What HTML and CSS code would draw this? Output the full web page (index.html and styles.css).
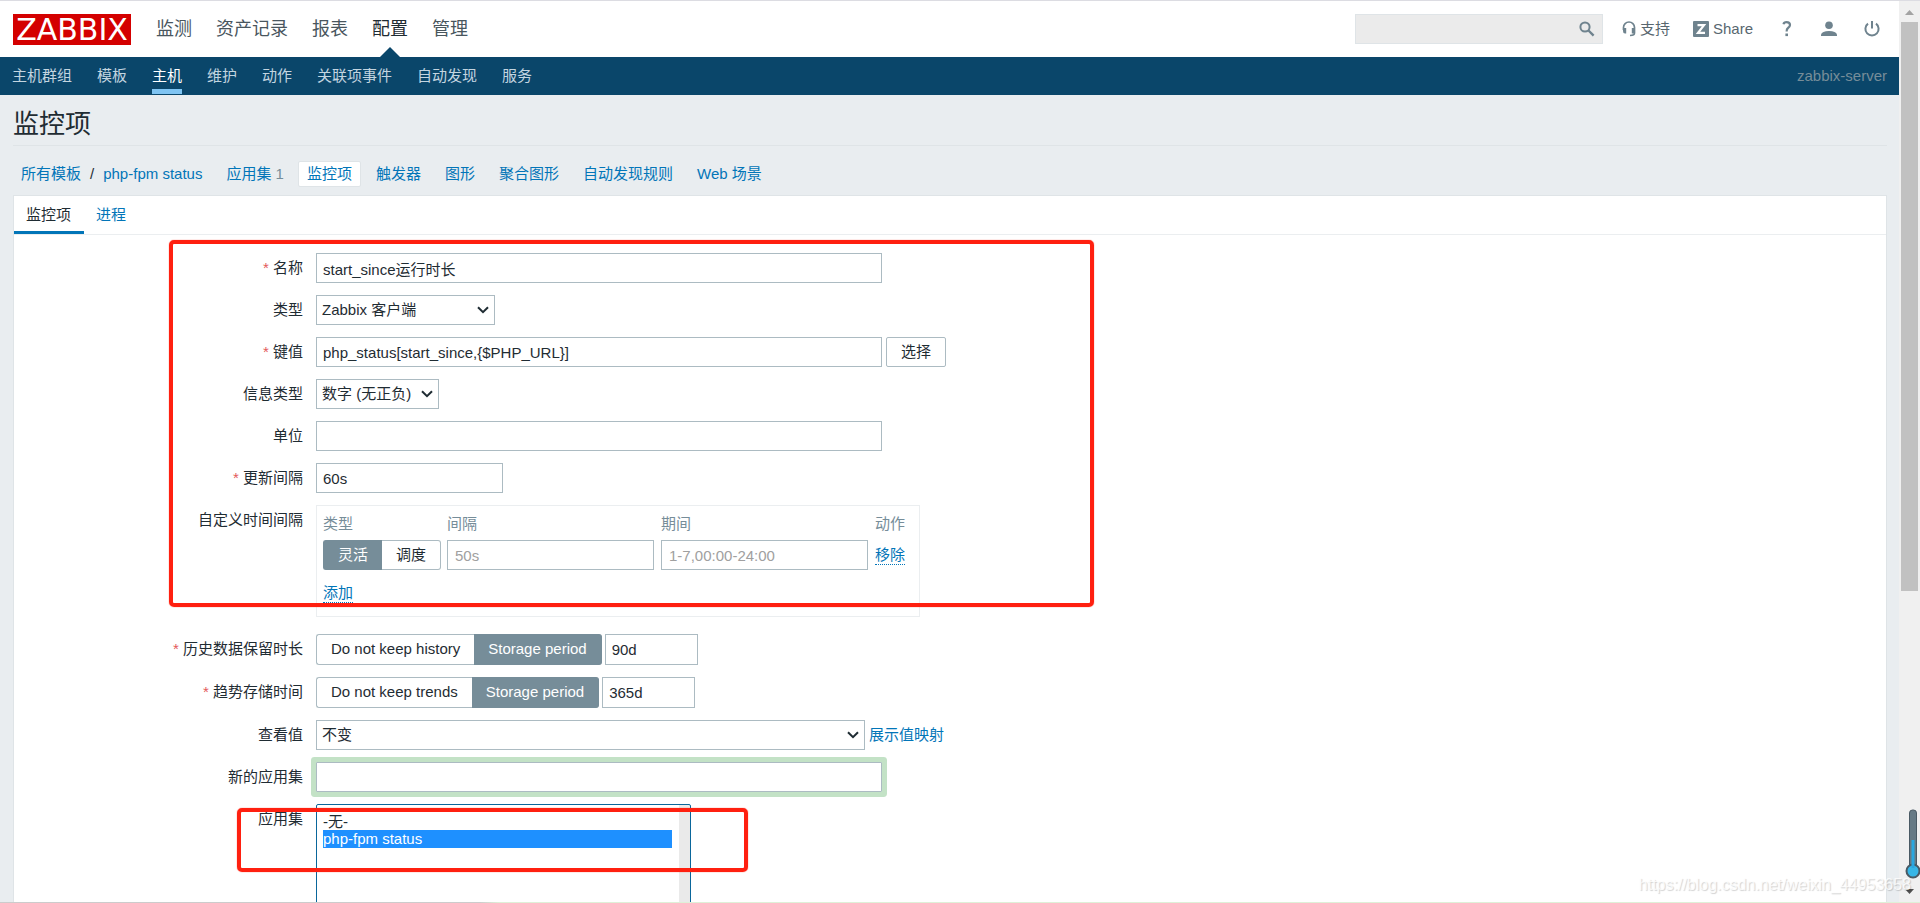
FILE: index.html
```
<!DOCTYPE html>
<html lang="zh-CN">
<head>
  <meta charset="UTF-8">
  <meta name="viewport" content="width=device-width, initial-scale=1.0">
  <title>监控项 - Zabbix</title>
  <link rel="stylesheet" href="styles.css">
</head>
<body>
  <div class="page">
    <header class="top-nav">
      <a href="#" class="logo">ZABBIX</a>
      <nav class="main-menu">
        <a href="#">监测</a>
        <a href="#">资产记录</a>
        <a href="#">报表</a>
        <a href="#" class="selected">配置</a>
        <a href="#">管理</a>
      </nav>
      <form class="search">
        <input type="text" aria-label="搜索">
        <button type="button" aria-label="搜索">
          <svg width="16" height="16" viewBox="0 0 16 16"><circle cx="6" cy="6" r="4.6" fill="none" stroke="#6f838e" stroke-width="2"/><path d="M9.5 9.5L14.6 14.6" stroke="#6f838e" stroke-width="2.4"/></svg>
        </button>
      </form>
      <div class="user-menu">
        <a href="#" class="support">
          <svg width="14" height="16" viewBox="0 0 14 16"><path d="M1.500 9V6.500A5.500 5.500 0 0 1 12.500 6.500V12Q12.500 14.300 8 14.500" fill="none" stroke="#6f838e" stroke-width="1.700"/><path d="M1 7h3.200v5.500H3Q1 12.500 1 10zM13 7H9.800v5.500H13z" fill="#6f838e"/></svg>
          支持
        </a>
        <a href="#" class="share">
          <svg width="16" height="16" viewBox="0 0 16 16"><rect width="16" height="16" rx="1" fill="#6f838e"/><path d="M4.500 4.200h6.500L5 11.800h7" fill="none" stroke="#fff" stroke-width="2.200"/></svg>
          Share
        </a>
        <a href="#" class="help" aria-label="帮助">
          <svg width="10" height="16" viewBox="0 0 10 16"><path d="M1.500 3.200Q2 1.200 4.500 1.200Q8 1.200 8 4Q8 5.500 6 7Q4.600 8 4.600 10.500" fill="none" stroke="#6f838e" stroke-width="2.200"/><rect x="3.400" y="12.500" width="2.600" height="2.600" fill="#6f838e"/></svg>
        </a>
        <a href="#" class="profile" aria-label="用户">
          <svg width="16" height="16" viewBox="0 0 16 16"><circle cx="8" cy="4.200" r="3.800" fill="#6f838e"/><path d="M0 15V13.500Q1 10 8 10T16 13.500V15z" fill="#6f838e"/></svg>
        </a>
        <a href="#" class="signout" aria-label="退出">
          <svg width="16" height="16" viewBox="0 0 16 16"><path d="M4 2.600A6.600 6.600 0 1 0 12 2.600M8 0V7.500" fill="none" stroke="#6f838e" stroke-width="2"/></svg>
        </a>
      </div>
    </header>

    <nav class="sub-nav">
      <a href="#">主机群组</a>
      <a href="#">模板</a>
      <a href="#" class="selected">主机</a>
      <a href="#">维护</a>
      <a href="#">动作</a>
      <a href="#">关联项事件</a>
      <a href="#">自动发现</a>
      <a href="#">服务</a>
      <span class="server-name">zabbix-server</span>
    </nav>

    <main>
      <h1>监控项</h1>
      <nav class="breadcrumbs">
        <a href="#">所有模板</a>
        <span class="slash">/</span>
        <a href="#">php-fpm status</a>
        <span class="object"><a href="#">应用集</a> <sup>1</sup></span>
        <a href="#" class="object selected">监控项</a>
        <a href="#" class="object">触发器</a>
        <a href="#" class="object">图形</a>
        <a href="#" class="object">聚合图形</a>
        <a href="#" class="object">自动发现规则</a>
        <a href="#" class="object">Web 场景</a>
      </nav>

      <section class="panel">
        <div class="tabs">
          <a href="#" class="selected">监控项</a>
          <a href="#">进程</a>
        </div>

        <form class="item-form">
          <div class="row">
            <label for="name" class="required">名称</label>
            <input type="text" id="name" class="wide" value="start_since运行时长">
          </div>
          <div class="row">
            <label for="type">类型</label>
            <select id="type" class="dropdown type-select"><option>Zabbix 客户端</option></select>
          </div>
          <div class="row">
            <label for="key" class="required">键值</label>
            <input type="text" id="key" class="wide" value="php_status[start_since,{$PHP_URL}]">
            <button type="button" class="btn">选择</button>
          </div>
          <div class="row">
            <label for="value_type">信息类型</label>
            <select id="value_type" class="dropdown value-select"><option>数字 (无正负)</option></select>
          </div>
          <div class="row">
            <label for="units">单位</label>
            <input type="text" id="units" class="wide">
          </div>
          <div class="row">
            <label for="delay" class="required">更新间隔</label>
            <input type="text" id="delay" class="delay" value="60s">
          </div>
          <div class="row intervals-row">
            <span class="label">自定义时间间隔</span>
            <div class="intervals">
              <table>
                <thead>
                  <tr><th class="col-type">类型</th><th class="col-text">间隔</th><th class="col-text">期间</th><th>动作</th></tr>
                </thead>
                <tbody>
                  <tr>
                    <td>
                      <div class="segmented">
                        <input type="radio" name="flex" id="flex_0" checked><label for="flex_0">灵活</label>
                        <input type="radio" name="flex" id="flex_1"><label for="flex_1">调度</label>
                      </div>
                    </td>
                    <td><input type="text" placeholder="50s" aria-label="间隔"></td>
                    <td><input type="text" placeholder="1-7,00:00-24:00" aria-label="期间"></td>
                    <td><a href="#" class="action">移除</a></td>
                  </tr>
                  <tr class="add-row"><td colspan="4"><a href="#" class="action">添加</a></td></tr>
                </tbody>
              </table>
            </div>
          </div>
          <div class="row storage">
            <label for="history" class="required">历史数据保留时长</label>
            <div class="segmented">
              <input type="radio" name="history_mode" id="history_0"><label for="history_0">Do not keep history</label>
              <input type="radio" name="history_mode" id="history_1" checked><label for="history_1">Storage period</label>
            </div>
            <input type="text" id="history" value="90d">
          </div>
          <div class="row storage">
            <label for="trends" class="required">趋势存储时间</label>
            <div class="segmented">
              <input type="radio" name="trends_mode" id="trends_0"><label for="trends_0">Do not keep trends</label>
              <input type="radio" name="trends_mode" id="trends_1" checked><label for="trends_1">Storage period</label>
            </div>
            <input type="text" id="trends" value="365d">
          </div>
          <div class="row">
            <label for="valuemap">查看值</label>
            <select id="valuemap" class="dropdown valuemap"><option>不变</option></select>
            <a href="#" class="map-link">展示值映射</a>
          </div>
          <div class="row">
            <label for="new_app">新的应用集</label>
            <input type="text" id="new_app" class="wide highlighted">
          </div>
          <div class="row">
            <label for="apps">应用集</label>
            <select id="apps" class="listbox" multiple size="10">
              <option>-无-</option>
              <option selected>php-fpm status</option>
            </select>
          </div>
          <div class="mark mark-fields"></div>
          <div class="mark mark-apps"></div>
        </form>
      </section>
    </main>
  </div>

  <div class="scrollbar">
    <svg class="arrow" width="9" height="5" viewBox="0 0 9 5"><path d="M0 5L4.500 0L9 5z" fill="#a3a3a3"/></svg>
    <div class="thumb"></div>
    <svg class="arrow" width="9" height="5" viewBox="0 0 9 5"><path d="M0 0L4.500 5L9 0z" fill="#505050"/></svg>
  </div>

  <svg class="thermometer" width="16" height="70" viewBox="0 0 16 70">
    <rect x="4.500" y="1" width="7" height="60" rx="3" fill="#667a85" stroke="#4a5a64"/>
    <circle cx="8" cy="62" r="6.500" fill="#37b6e6" stroke="#4a5a64" stroke-width="2"/>
    <rect x="6.500" y="31" width="3" height="28" fill="#2aa7e0"/>
  </svg>
  <div class="watermark">https://blog.csdn.net/weixin_44953658</div>
  <div class="bottom-strip"></div>
</body>
</html>
```
FILE: styles.css
```
* {
  box-sizing: border-box;
}
body {
  display: flex;
  height: 100vh;
  margin: 0;
  overflow: hidden;
  position: relative;
  border-top: 1px solid #dcdce2;
  background: #e9edf0;
  color: #1f2c33;
  font-family: "Liberation Sans", "Noto Sans CJK SC", sans-serif;
  font-size: 15px;
  line-height: 18px;
}
a {
  color: #0275b8;
  text-decoration: none;
}
svg {
  display: block;
  flex: none;
}
input, select, button {
  font: inherit;
  color: inherit;
}
.page {
  flex: 1;
  min-width: 0;
  overflow: hidden;
}

/* header */
.top-nav {
  display: flex;
  align-items: center;
  height: 56px;
  padding: 0 19px 0 13px;
  background: #fff;
}
.logo {
  width: 118px;
  height: 31px;
  background: #d40000;
  color: #fff;
  font-family: "DejaVu Sans", sans-serif;
  font-size: 30px;
  line-height: 31px;
  text-align: center;
}
.main-menu {
  display: flex;
  gap: 24px;
  margin-left: 25px;
  font-size: 18px;
  line-height: 56px;
}
.main-menu a {
  color: #49565e;
  position: relative;
}
.main-menu .selected {
  color: #1f2c33;
}
.main-menu .selected::after {
  content: "";
  position: absolute;
  left: 8px;
  bottom: 0;
  border: 10px solid transparent;
  border-top: 0;
  border-bottom-color: #0a466a;
}
.search {
  display: flex;
  width: 248px;
  height: 30px;
  margin-left: auto;
  border: 1px solid #dfe4e7;
  background: #ebebeb;
}
.search input {
  flex: 1;
  min-width: 0;
  border: 0;
  background: none;
}
.search button {
  padding: 0 7px;
  border: 0;
  background: none;
}
.user-menu {
  display: flex;
  align-items: center;
  margin-left: 19px;
}
.user-menu a {
  display: flex;
  align-items: center;
  gap: 4px;
  color: #58676f;
}
.user-menu .share {
  margin-left: 23px;
}
.user-menu .help {
  margin-left: 29px;
}
.user-menu .profile {
  margin-left: 29px;
}
.user-menu .signout {
  margin-left: 27px;
}
.sub-nav {
  display: flex;
  gap: 25px;
  height: 38px;
  padding: 0 12px;
  background: #0a466a;
  line-height: 38px;
}
.sub-nav a {
  color: #c3d5e0;
}
.sub-nav .selected {
  height: 37px;
  border-bottom: 5px solid #7fc4f2;
  color: #fff;
}
.server-name {
  margin-left: auto;
  color: #768d99;
}

/* content */
main {
  padding: 0 12px 0 13px;
}
h1 {
  margin: 0;
  height: 51px;
  border-bottom: 1px solid #dfe4e7;
  font-size: 26px;
  font-weight: normal;
  line-height: 58px;
}
.breadcrumbs {
  display: flex;
  align-items: center;
  height: 49px;
  padding: 6px 8px 0;
}
.slash {
  margin: 0 9px;
}
.object {
  margin-left: 24px;
}
.object sup {
  color: #768d99;
  font-size: 15px;
  line-height: 18px;
  vertical-align: baseline;
}
.object.selected {
  margin: 0 -9px 0 14px;
  padding: 3px 8px;
  border: 1px solid #dfe4e7;
  border-radius: 2px;
  background: #fff;
}
.panel {
  border: 1px solid #dfe4e7;
  background: #fff;
}
.tabs {
  display: flex;
  height: 39px;
  border-bottom: 1px solid #ebeef0;
  line-height: 38px;
}
.tabs a {
  padding: 0 13px 0 12px;
}
.tabs .selected {
  border-bottom: 3px solid #0275b8;
  color: #1f2c33;
}

/* form */
.item-form {
  position: relative;
  padding-top: 18px;
}
.row {
  display: flex;
  gap: 4px;
  margin-bottom: 12px;
}
.row > label, .row > .label {
  width: 289px;
  margin-right: 9px;
  line-height: 30px;
  text-align: right;
}
.required::before {
  content: "* ";
  color: #e45959;
}
input[type="text"], .row select {
  height: 30px;
}
.row input[type="text"] {
  padding: 0 6px;
  border: 1px solid #acbbc2;
  background: #fff;
}
.row select {
  border: 1px solid #acbbc2;
  border-radius: 0;
  background-color: #fff;
}
.row .dropdown {
  appearance: none;
  padding: 0 20px 0 5px;
  background: #fff url("data:image/svg+xml,%3Csvg xmlns='http://www.w3.org/2000/svg' width='12' height='8'%3E%3Cpath d='M1 1.200L6 6.200L11 1.200' fill='none' stroke='%231f2c33' stroke-width='2'/%3E%3C/svg%3E") right 5px center no-repeat;
}
.row .wide {
  width: 566px;
}
.type-select {
  width: 179px;
}
.value-select {
  width: 123px;
}
.delay {
  width: 187px;
}
.valuemap {
  width: 549px;
}
.btn {
  width: 60px;
  height: 30px;
  padding: 0;
  border: 1px solid #acbbc2;
  border-radius: 2px;
  background: #fff;
}
.map-link {
  line-height: 30px;
}
.intervals-row {
  margin-bottom: 17px;
}
.intervals {
  width: 604px;
  padding-left: 6px;
  border: 1px solid #ebeef0;
}
.intervals table {
  width: 100%;
  border-collapse: collapse;
  table-layout: fixed;
}
.intervals th {
  height: 34px;
  padding: 2px 0 0;
  color: #768d99;
  font-weight: normal;
  text-align: left;
}
.intervals td {
  height: 30px;
  padding: 0;
}
.intervals .add-row td {
  height: 46px;
}
.col-type {
  width: 124px;
}
.col-text {
  width: 214px;
}
.intervals input[type="text"] {
  display: block;
  width: 207px;
  padding: 0 7px;
}
.intervals input::placeholder {
  color: #a0a0a0;
}
.action {
  display: inline-block;
  border-bottom: 1px dotted #0275b8;
}
.segmented {
  display: flex;
  position: relative;
}
.segmented input {
  position: absolute;
  opacity: 0;
}
.segmented label {
  height: 30px;
  padding: 0 14px;
  border: 1px solid #acbbc2;
  line-height: 27px;
}
.segmented label:first-of-type {
  border-right: 0;
  border-radius: 3px 0 0 3px;
}
.segmented label:last-of-type {
  border-left: 0;
  border-radius: 0 3px 3px 0;
}
.segmented input:checked + label {
  border-color: #768d99;
  background: #768d99;
  color: #fff;
}
.storage {
  gap: 3px;
}
.storage > label {
  margin-right: 10px;
}
.storage .segmented label, .storage input[type="text"] {
  height: 31px;
}
.storage input[type="text"] {
  width: 93px;
}
.row .highlighted {
  box-shadow: 0 0 0 5px #c3e2c6;
  border-radius: 1px;
}
.row .listbox {
  width: 375px;
  height: 182px;
  padding: 7px 18px 7px 6px;
  overflow: hidden;
  border-color: #0a669b;
  border-radius: 2px;
  background: linear-gradient(#eaeaea, #eaeaea) right / 11px 100% no-repeat #fff;
}
.listbox option {
  display: flex;
  align-items: center;
  height: 18px;
  min-height: 18px;
  padding: 0 0 2px;
}
.listbox option:checked {
  background: linear-gradient(#1e90ff, #1e90ff);
  color: #fff;
}

/* red frames drawn over the form */
.mark {
  position: absolute;
  border: 4px solid #ff2010;
  border-radius: 5px;
  box-shadow: 0 0 1px #ff2010;
  pointer-events: none;
}
.mark-fields {
  top: 5px;
  left: 155px;
  width: 925px;
  height: 367px;
}
.mark-apps {
  top: 573px;
  left: 223px;
  width: 511px;
  height: 64px;
}

/* window scrollbar */
.scrollbar {
  display: flex;
  flex-direction: column;
  align-items: center;
  width: 21px;
  padding: 9px 2px;
  background: #f0f0f0;
}
.thumb {
  width: 100%;
  height: 63vh;
  margin: 7px 0 auto;
  background: #c1c1c1;
}
.thermometer {
  position: absolute;
  right: -1px;
  bottom: 24px;
}
.watermark {
  position: absolute;
  right: 9px;
  bottom: 9px;
  color: rgba(255, 255, 255, 0.8);
  font-size: 16px;
  text-shadow: 1px 1px 1px rgba(0, 0, 0, 0.18);
}
.bottom-strip {
  position: absolute;
  right: 0;
  bottom: 0;
  left: 0;
  height: 1px;
  background: linear-gradient(90deg, #cccccc 25%, #dff0d8 26%);
}
```
